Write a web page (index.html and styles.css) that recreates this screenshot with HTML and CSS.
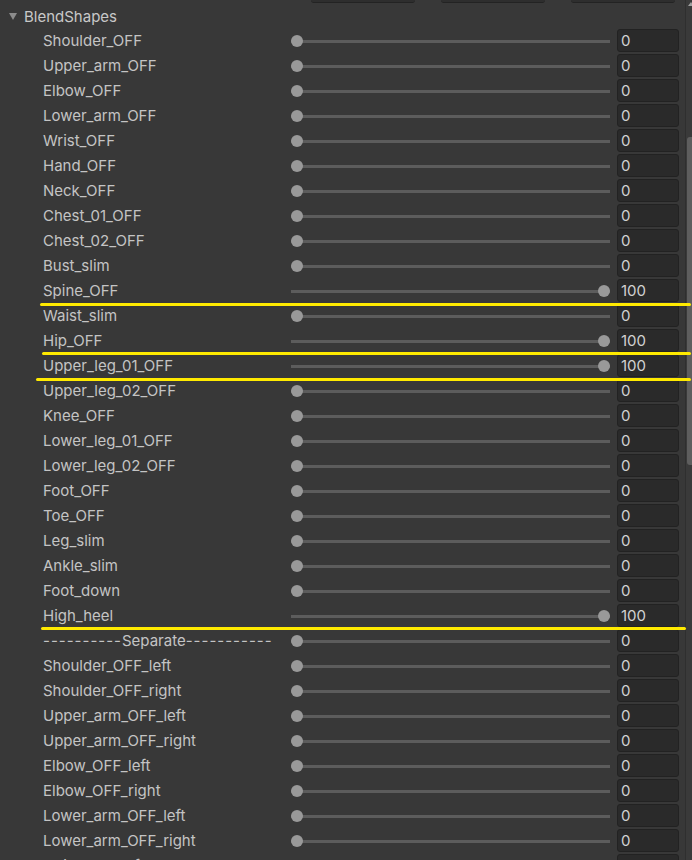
FILE: index.html
```html
<!DOCTYPE html>
<html>
<head>
<meta charset="utf-8">
<link rel="stylesheet" href="styles.css">
</head>
<body>
<div class="page">
  <div class="main">
    <div class="topbar">
      <div class="tbtn"></div>
      <div class="tbtn"></div>
      <div class="tbtn"></div>
    </div>
    <div class="header"><span class="tri"></span><span class="htext">BlendShapes</span></div>
    <div class="rows">
      <div class="row"><div class="label">Shoulder_OFF</div><div class="slider"><div class="track"></div><div class="knob"></div></div><div class="field">0</div></div>
      <div class="row"><div class="label">Upper_arm_OFF</div><div class="slider"><div class="track"></div><div class="knob"></div></div><div class="field">0</div></div>
      <div class="row"><div class="label">Elbow_OFF</div><div class="slider"><div class="track"></div><div class="knob"></div></div><div class="field">0</div></div>
      <div class="row"><div class="label">Lower_arm_OFF</div><div class="slider"><div class="track"></div><div class="knob"></div></div><div class="field">0</div></div>
      <div class="row"><div class="label">Wrist_OFF</div><div class="slider"><div class="track"></div><div class="knob"></div></div><div class="field">0</div></div>
      <div class="row"><div class="label">Hand_OFF</div><div class="slider"><div class="track"></div><div class="knob"></div></div><div class="field">0</div></div>
      <div class="row"><div class="label">Neck_OFF</div><div class="slider"><div class="track"></div><div class="knob"></div></div><div class="field">0</div></div>
      <div class="row"><div class="label">Chest_01_OFF</div><div class="slider"><div class="track"></div><div class="knob"></div></div><div class="field">0</div></div>
      <div class="row"><div class="label">Chest_02_OFF</div><div class="slider"><div class="track"></div><div class="knob"></div></div><div class="field">0</div></div>
      <div class="row"><div class="label">Bust_slim</div><div class="slider"><div class="track"></div><div class="knob"></div></div><div class="field">0</div></div>
      <div class="row"><div class="label">Spine_OFF</div><div class="slider"><div class="track"></div><div class="knob max"></div></div><div class="field">100</div></div>
      <div class="row"><div class="label">Waist_slim</div><div class="slider"><div class="track"></div><div class="knob"></div></div><div class="field">0</div></div>
      <div class="row"><div class="label">Hip_OFF</div><div class="slider"><div class="track"></div><div class="knob max"></div></div><div class="field">100</div></div>
      <div class="row"><div class="label">Upper_leg_01_OFF</div><div class="slider"><div class="track"></div><div class="knob max"></div></div><div class="field">100</div></div>
      <div class="row"><div class="label">Upper_leg_02_OFF</div><div class="slider"><div class="track"></div><div class="knob"></div></div><div class="field">0</div></div>
      <div class="row"><div class="label">Knee_OFF</div><div class="slider"><div class="track"></div><div class="knob"></div></div><div class="field">0</div></div>
      <div class="row"><div class="label">Lower_leg_01_OFF</div><div class="slider"><div class="track"></div><div class="knob"></div></div><div class="field">0</div></div>
      <div class="row"><div class="label">Lower_leg_02_OFF</div><div class="slider"><div class="track"></div><div class="knob"></div></div><div class="field">0</div></div>
      <div class="row"><div class="label">Foot_OFF</div><div class="slider"><div class="track"></div><div class="knob"></div></div><div class="field">0</div></div>
      <div class="row"><div class="label">Toe_OFF</div><div class="slider"><div class="track"></div><div class="knob"></div></div><div class="field">0</div></div>
      <div class="row"><div class="label">Leg_slim</div><div class="slider"><div class="track"></div><div class="knob"></div></div><div class="field">0</div></div>
      <div class="row"><div class="label">Ankle_slim</div><div class="slider"><div class="track"></div><div class="knob"></div></div><div class="field">0</div></div>
      <div class="row"><div class="label">Foot_down</div><div class="slider"><div class="track"></div><div class="knob"></div></div><div class="field">0</div></div>
      <div class="row"><div class="label">High_heel</div><div class="slider"><div class="track"></div><div class="knob max"></div></div><div class="field">100</div></div>
      <div class="row"><div class="label"><span class="dash">----------</span>Separate<span class="dash">-----------</span></div><div class="slider"><div class="track"></div><div class="knob"></div></div><div class="field">0</div></div>
      <div class="row"><div class="label">Shoulder_OFF_left</div><div class="slider"><div class="track"></div><div class="knob"></div></div><div class="field">0</div></div>
      <div class="row"><div class="label">Shoulder_OFF_right</div><div class="slider"><div class="track"></div><div class="knob"></div></div><div class="field">0</div></div>
      <div class="row"><div class="label">Upper_arm_OFF_left</div><div class="slider"><div class="track"></div><div class="knob"></div></div><div class="field">0</div></div>
      <div class="row"><div class="label">Upper_arm_OFF_right</div><div class="slider"><div class="track"></div><div class="knob"></div></div><div class="field">0</div></div>
      <div class="row"><div class="label">Elbow_OFF_left</div><div class="slider"><div class="track"></div><div class="knob"></div></div><div class="field">0</div></div>
      <div class="row"><div class="label">Elbow_OFF_right</div><div class="slider"><div class="track"></div><div class="knob"></div></div><div class="field">0</div></div>
      <div class="row"><div class="label">Lower_arm_OFF_left</div><div class="slider"><div class="track"></div><div class="knob"></div></div><div class="field">0</div></div>
      <div class="row"><div class="label">Lower_arm_OFF_right</div><div class="slider"><div class="track"></div><div class="knob"></div></div><div class="field">0</div></div>
      <div class="row"><div class="label">Wrist_OFF_left</div><div class="slider"><div class="track"></div><div class="knob"></div></div><div class="field">0</div></div>
    </div>
  </div>
  <div class="scrollbar">
    <div class="arrow"></div>
    <div class="thumb"></div>
  </div>
  <div class="mark mark-spine"></div>
  <div class="mark mark-hip"></div>
  <div class="mark mark-leg"></div>
  <div class="mark mark-heel"></div>
</div>
</body>
</html>
```

FILE: styles.css
```css
html, body {
  margin: 0;
  padding: 0;
  background: #383838;
  overflow: hidden;
}
body {
  width: 692px;
  height: 860px;
  font-family: Inter, "Noto Sans", "DejaVu Sans", sans-serif;
  font-size: 15px;
  color: #c4c4c4;
}
.page {
  position: relative;
  display: flex;
  width: 692px;
  height: 860px;
  overflow: hidden;
}
.main {
  width: 685px;
  flex-shrink: 0;
  display: flex;
  flex-direction: column;
}
.topbar {
  flex-shrink: 0;
  height: 4px;
  display: flex;
  gap: 26px;
  padding-left: 311px;
}
.tbtn {
  width: 104px;
  height: 2px;
  background: #2e2e2e;
  border-bottom: 1px solid #232323;
  border-radius: 0 0 3px 3px;
}
.header {
  flex-shrink: 0;
  height: 25px;
  display: flex;
  align-items: center;
  padding-left: 9px;
  box-sizing: border-box;
  padding-bottom: 1px;
}
.tri {
  width: 0;
  height: 0;
  border-left: 4px solid transparent;
  border-right: 4px solid transparent;
  border-top: 7px solid #8c8c8c;
  margin-right: 7px;
  margin-top: 1px;
}
.htext {
  color: #c8c8c8;
}
.rows {
  flex-shrink: 0;
  display: flex;
  flex-direction: column;
}
.row {
  flex-shrink: 0;
  height: 25px;
  display: flex;
  align-items: flex-start;
}
.label {
  width: 248px;
  padding-left: 43px;
  height: 24px;
  line-height: 24px;
  white-space: nowrap;
  overflow: hidden;
}
.dash {
  letter-spacing: 1px;
}
.slider {
  position: relative;
  width: 319px;
  height: 24px;
  margin-right: 7px;
}
.track {
  position: absolute;
  left: 0;
  right: 0;
  top: 11px;
  height: 3px;
  background: #5c5c5c;
}
.knob {
  position: absolute;
  left: 0;
  top: 6px;
  width: 12px;
  height: 12px;
  border-radius: 50%;
  background: #999999;
}
.knob.max {
  left: 307px;
}
.field {
  width: 57px;
  height: 21px;
  border: 1px solid #222222;
  border-radius: 3px;
  background: #2a2a2a;
  color: #d2d2d2;
  line-height: 21px;
  padding-left: 3px;
  box-sizing: content-box;
}
.scrollbar {
  position: relative;
  width: 7px;
  flex-shrink: 0;
  border-left: 1px solid #2f2f2f;
  background: #3a3a3a;
}
.arrow {
  margin: 2px 0 0 2px;
  width: 0;
  height: 0;
  border-left: 3px solid transparent;
  border-right: 3px solid transparent;
  border-bottom: 4px solid #a0a0a0;
}
.thumb {
  margin-top: 131px;
  margin-left: 1px;
  width: 6px;
  height: 328px;
  background: #5e5e5e;
  border-radius: 3px 0 0 3px;
}
.mark {
  position: absolute;
  height: 3px;
  background: #ffea00;
  border-radius: 2px;
}
.mark-spine { top: 303px; left: 40px; width: 651px; }
.mark-hip { top: 352px; left: 42px; width: 649px; }
.mark-leg { top: 378px; left: 36px; width: 655px; }
.mark-heel { top: 627px; left: 41px; width: 645px; }
```
